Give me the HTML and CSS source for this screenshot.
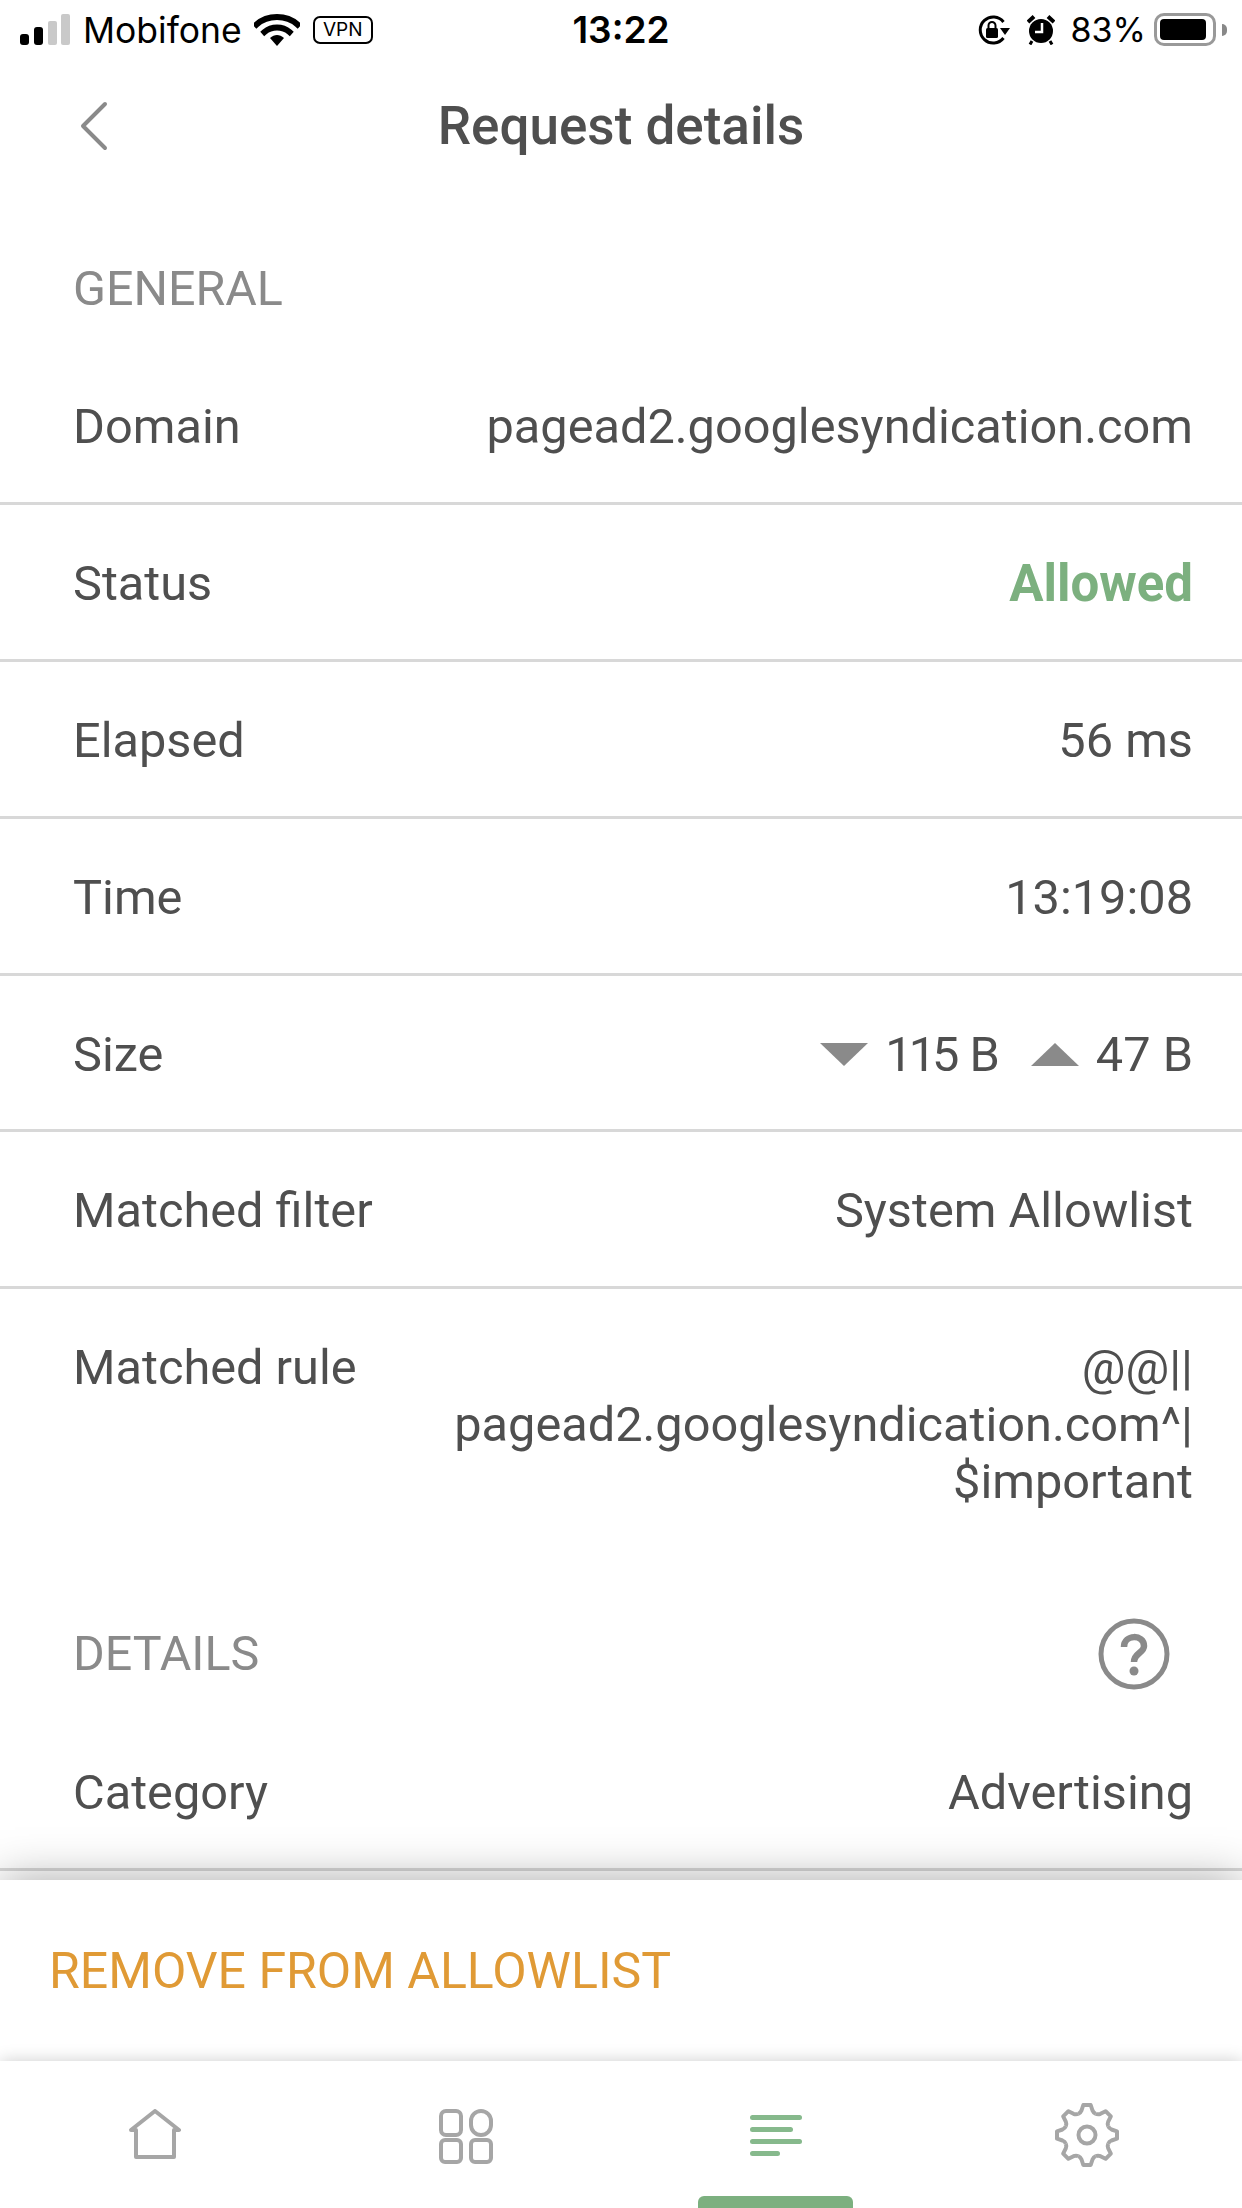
FILE: index.html
```html
<!DOCTYPE html>
<html lang="en">
<head>
    <meta charset="UTF-8">
    <meta name="viewport" content="width=device-width, initial-scale=1.0">
    <title>Request details</title>
    <link rel="stylesheet" href="styles.css">
</head>
<body>
    <div class="statusbar">
        <div class="status-left">
            <svg class="signal" width="50" height="31" viewBox="0 0 50 31">
                <rect x="0" y="20" width="9" height="11" rx="3" fill="#000"/>
                <rect x="14" y="13" width="9" height="18" rx="3" fill="#000"/>
                <rect x="28" y="7" width="9" height="24" rx="2" fill="#c9c9c9"/>
                <rect x="41" y="0" width="9" height="31" rx="2" fill="#c9c9c9"/>
            </svg>
            <span class="carrier">Mobifone</span>
            <svg class="wifi" width="46" height="33" viewBox="0 0 46 33">
                <path d="M2.5 11.5C13.5 1.5 32.5 1.5 43.5 11.500" fill="none" stroke="#000" stroke-width="6" stroke-linecap="square"/>
                <path d="M10.500 19C17.500 13 28.500 13 35.500 19" fill="none" stroke="#000" stroke-width="6" stroke-linecap="square"/>
                <path d="M16 25C20.500 21 25.500 21 30 25L23 33Z" fill="#000"/>
            </svg>
            <span class="vpn">VPN</span>
        </div>
        <div class="clock">13:22</div>
        <div class="status-right">
            <svg width="33" height="30" viewBox="0 0 33 30">
                <path d="M26.500 7A13 13 0 1 0 26.500 23" fill="none" stroke="#000" stroke-width="3"/>
                <path d="M23 13H33L28 20Z" fill="#000"/>
                <rect x="9" y="13" width="12" height="10" rx="1.500" fill="#000"/>
                <path d="M11.500 13V10.500a3.500 3.500 0 0 1 7 0V13" fill="none" stroke="#000" stroke-width="2"/>
            </svg>
            <svg class="alarm" width="28" height="30" viewBox="0 0 28 30">
                <circle cx="14" cy="16" r="12" fill="#000"/>
                <path d="M1 7L7 1.500M27 7L21 1.500" stroke="#000" stroke-width="4"/>
                <path d="M5 26L3 29.500M23 26L25 29.500" stroke="#000" stroke-width="3"/>
                <path d="M15 8V17H8" fill="none" stroke="#fff" stroke-width="2.500"/>
            </svg>
            <span class="battery-text">83%</span>
            <div class="battery"><div class="battery-fill"></div></div>
            <div class="battery-tip"></div>
        </div>
    </div>

    <div class="navbar">
        <svg class="back" width="30" height="50" viewBox="0 0 30 50">
            <path d="M26 3L4 25L26 47" fill="none" stroke="#8a8a8a" stroke-width="4" stroke-linecap="round" stroke-linejoin="round"/>
        </svg>
        <h1>Request details</h1>
    </div>

    <div class="content">
        <div class="section-head general-head">GENERAL</div>
        <div class="row"><span>Domain</span><span class="value">pagead2.googlesyndication.com</span></div>
        <div class="row"><span>Status</span><span class="value allowed">Allowed</span></div>
        <div class="row"><span>Elapsed</span><span class="value">56 ms</span></div>
        <div class="row"><span>Time</span><span class="value">13:19:08</span></div>
        <div class="row">
            <span>Size</span>
            <span class="value sizes">
                <svg width="48" height="23" viewBox="0 0 48 23"><path d="M0 0H48L24 23Z" fill="#8a8a8a"/></svg>
                <span class="size-num down-num">115 B</span>
                <svg class="up" width="48" height="23" viewBox="0 0 48 23"><path d="M0 23H48L24 0Z" fill="#8a8a8a"/></svg>
                <span class="size-num">47 B</span>
            </span>
        </div>
        <div class="row"><span>Matched filter</span><span class="value">System Allowlist</span></div>
        <div class="row rule-row">
            <span>Matched rule</span>
            <span class="value rule">@@||<br>pagead2.googlesyndication.com^|<br>$important</span>
        </div>
        <div class="section-head details-head">
            <span>DETAILS</span>
            <svg width="72" height="72" viewBox="0 0 72 72">
                <circle cx="36" cy="36" r="33" fill="none" stroke="#8a8a8a" stroke-width="5"/>
                <path d="M26 29C26 16 46 16 46 28C46 35 36 35 36 44" fill="none" stroke="#8a8a8a" stroke-width="6.500"/>
                <circle cx="36" cy="53" r="4.500" fill="#8a8a8a"/>
            </svg>
        </div>
        <div class="row"><span>Category</span><span class="value">Advertising</span></div>
    </div>

    <div class="action-panel">
        <span class="action">REMOVE FROM ALLOWLIST</span>
    </div>

    <div class="tabbar">
        <div class="tab">
            <svg width="54" height="50" viewBox="0 0 54 50">
                <path d="M3 21L27 2L51 21H46V48H8V21Z" fill="none" stroke="#a6a6a6" stroke-width="4" stroke-linejoin="round"/>
            </svg>
        </div>
        <div class="tab">
            <svg width="54" height="55" viewBox="0 0 54 55">
                <rect x="2" y="2" width="20" height="24" rx="5" fill="none" stroke="#a6a6a6" stroke-width="4"/>
                <rect x="32" y="2" width="20" height="24" rx="10" fill="none" stroke="#a6a6a6" stroke-width="4"/>
                <rect x="2" y="31" width="20" height="22" rx="4" fill="none" stroke="#a6a6a6" stroke-width="4"/>
                <rect x="32" y="31" width="20" height="22" rx="4" fill="none" stroke="#a6a6a6" stroke-width="4"/>
            </svg>
        </div>
        <div class="tab active">
            <svg width="52" height="42" viewBox="0 0 52 42">
                <rect x="0" y="0" width="52" height="5" rx="2.500" fill="#86b98c"/>
                <rect x="0" y="12" width="43" height="5" rx="2.500" fill="#86b98c"/>
                <rect x="0" y="24" width="52" height="5" rx="2.500" fill="#86b98c"/>
                <rect x="0" y="36" width="30" height="5" rx="2.500" fill="#86b98c"/>
            </svg>
            <div class="tab-marker"></div>
        </div>
        <div class="tab gear-tab">
            <svg width="66" height="66" viewBox="-33 -33 66 66">
                <defs>
                    <path id="tooth" d="M-8.800 -21.200Q-6.500 -22 -5.500 -24.500L-3.700 -30L3.700 -30L5.500 -24.500Q6.500 -22 8.800 -21.200"/>
                </defs>
                <g fill="none" stroke="#a6a6a6" stroke-width="4" stroke-linejoin="round">
                    <use href="#tooth"/>
                    <use href="#tooth" transform="rotate(45)"/>
                    <use href="#tooth" transform="rotate(90)"/>
                    <use href="#tooth" transform="rotate(135)"/>
                    <use href="#tooth" transform="rotate(180)"/>
                    <use href="#tooth" transform="rotate(225)"/>
                    <use href="#tooth" transform="rotate(270)"/>
                    <use href="#tooth" transform="rotate(315)"/>
                    <circle cx="0" cy="0" r="8.500"/>
                </g>
            </svg>
        </div>
    </div>
</body>
</html>
```

FILE: styles.css
```css
/* General Reset */
* {
    margin: 0;
    padding: 0;
    box-sizing: border-box;
}

body {
    font-family: Roboto, sans-serif;
    background: #fff;
    color: #4f4f4f;
    width: 1242px;
    height: 2208px;
    display: flex;
    flex-direction: column;
    overflow: hidden;
}

/* Status bar */
.statusbar {
    height: 60px;
    padding: 13px 20px 0;
    display: grid;
    grid-template-columns: 1fr auto 1fr;
    font-family: Inter, sans-serif;
    font-size: 35.5px;
    color: #000;
    flex-shrink: 0;
}

.status-left,
.status-right {
    display: flex;
    align-items: flex-start;
}

.status-right {
    justify-content: flex-end;
    align-items: center;
    height: 33px;
    margin-right: -5px;
}

.signal {
    margin-top: 1px;
}

.carrier {
    margin-left: 13px;
    line-height: 36px;
}

.wifi {
    margin-left: 12px;
}

.vpn {
    margin-left: 13px;
    margin-top: 3px;
    width: 60px;
    height: 28px;
    border: 2.5px solid #000;
    border-radius: 7px;
    font-size: 19px;
    line-height: 23px;
    text-align: center;
}

.clock {
    font-weight: 600;
    font-size: 37px;
    line-height: 34px;
}

.alarm {
    margin-left: 17px;
}

.battery-text {
    margin-left: 16px;
    font-size: 34px;
}

.battery {
    margin-left: 8px;
    width: 62px;
    height: 33px;
    border: 3px solid #999;
    border-radius: 10px;
    padding: 3px;
}

.battery-fill {
    width: 46px;
    height: 21px;
    background: #000;
    border-radius: 4px;
}

.battery-tip {
    margin-left: 6px;
    width: 5px;
    height: 12px;
    background: #888;
    border-radius: 0 6px 6px 0;
}

/* Nav */
.navbar {
    height: 128px;
    position: relative;
    display: flex;
    justify-content: center;
    align-items: center;
    flex-shrink: 0;
    padding-top: 3px;
}

.navbar h1 {
    font-size: 53px;
    font-weight: 500;
    color: #4f4f4f;
}

.back {
    position: absolute;
    left: 79px;
    top: 41px;
}

/* Scrolling content */
.content {
    flex: 1;
    min-height: 0;
    overflow: hidden;
}

.section-head {
    padding: 0 73px;
    font-size: 48.4px;
    color: #8a8a8a;
    line-height: 56px;
}

.general-head {
    padding-top: 73px;
    padding-bottom: 31.5px;
}

.row {
    padding: 49.9px 49px 46.9px 73px;
    border-bottom: 3px solid #d8d8d8;
    display: flex;
    justify-content: space-between;
    align-items: flex-start;
    font-size: 48.7px;
    line-height: 57px;
}

.value {
    text-align: right;
}

.allowed {
    color: #7cb07f;
    font-weight: 700;
    font-size: 51px;
}

.sizes {
    display: flex;
    align-items: center;
}

.size-num {
    margin-left: 17px;
}

.down-num {
    letter-spacing: -4px;
    word-spacing: 6px;
}

.up {
    margin-left: 35px;
}

.rule-row {
    border-bottom: none;
    padding-bottom: 0;
}

.rule {
    width: 760px;
}

.details-head {
    display: flex;
    justify-content: space-between;
    align-items: center;
    padding: 108px 72px 24px 73px;
}

/* Bottom action */
.action-panel {
    height: 181px;
    flex-shrink: 0;
    display: flex;
    align-items: center;
    padding-left: 49px;
    background: #fff;
    box-shadow: 0 0 44px rgba(0, 0, 0, 0.34);
    position: relative;
    z-index: 1;
}

.action {
    font-size: 50px;
    color: #e09a35;
}

/* Tabs */
.tabbar {
    height: 147px;
    flex-shrink: 0;
    display: grid;
    grid-template-columns: repeat(4, 1fr);
    background: #fff;
    box-shadow: 0 0 16px rgba(0, 0, 0, 0.2);
    position: relative;
    z-index: 2;
}

.tab {
    position: relative;
    display: flex;
    justify-content: center;
    padding-top: 48px;
}

.tab.active {
    padding-top: 54px;
}

.gear-tab {
    padding-top: 41px;
}

.tab-marker {
    position: absolute;
    bottom: 0;
    left: 77px;
    width: 155px;
    height: 12px;
    background: #7cb07f;
    border-radius: 6px 6px 0 0;
}
```
